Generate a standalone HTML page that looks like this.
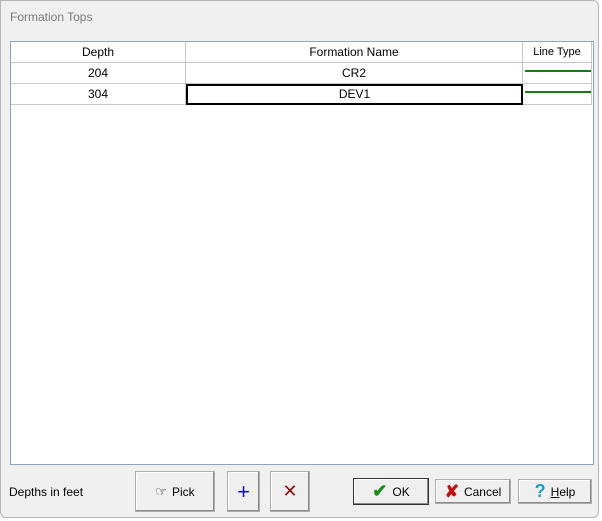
<!DOCTYPE html><html><head><style>
body{margin:0;width:602px;height:521px;background:#fff;position:relative;overflow:hidden;font-family:"Liberation Sans",sans-serif;font-size:12px;}
.win{position:absolute;left:0;top:0;width:599px;height:518px;background:#f0f0f0;border:1px solid #b5b5b5;border-radius:0 6px 6px 6px;box-sizing:border-box;}
.title{position:absolute;left:9px;top:9px;color:#7a7a7a;font-size:12px;}
.grid{position:absolute;left:9px;top:40px;width:584px;height:424px;background:#fff;border:1px solid #8aa5c0;box-sizing:border-box;}
.c{position:absolute;text-align:center;line-height:20px;color:#000;border-right:1px solid #c8c8c8;border-bottom:1px solid #c8c8c8;box-sizing:border-box;height:21px;}
.btn{position:absolute;background:#efefef;border:1px solid #adadad;box-shadow:inset -1px -1px 0 #8a8a8a, 1px 1px 0 #fff inset;box-sizing:border-box;display:flex;align-items:center;justify-content:center;gap:5px;}
.dk{border:1px solid #333;}
</style></head><body>
<div class="win">
<div class="title">Formation Tops</div>
<div class="grid">
<div class="c" style="left:0;top:0;width:175px;">Depth</div>
<div class="c" style="left:175px;top:0;width:337px;">Formation Name</div>
<div class="c" style="left:512px;top:0;width:69px;font-size:11px;">Line Type</div>
<div class="c" style="left:0;top:21px;width:175px;">204</div>
<div class="c" style="left:175px;top:21px;width:337px;">CR2</div>
<div class="c" style="left:512px;top:21px;width:69px;"><div style="position:absolute;left:2px;right:0;top:7px;height:2px;background:#1a7a1a"></div></div>
<div class="c" style="left:0;top:42px;width:175px;">304</div>
<div class="c" style="left:175px;top:42px;width:337px;border:2px solid #000;line-height:17px;">DEV1</div>
<div class="c" style="left:512px;top:42px;width:69px;"><div style="position:absolute;left:2px;right:0;top:7px;height:2px;background:#1a7a1a"></div></div>
</div>
<div style="position:absolute;left:8px;top:484px;">Depths in feet</div>
<div class="btn" style="left:134px;top:470px;width:80px;height:41px;"><span style="font-size:13px">☞</span>Pick</div>
<div class="btn" style="left:226px;top:470px;width:33px;height:41px;color:#1010d0;font-size:22px;">+</div>
<div class="btn" style="left:269px;top:470px;width:40px;height:41px;color:#8a1010;font-size:18px;">✕</div>
<div class="btn dk" style="left:352px;top:477px;width:76px;height:27px;"><span style="color:#1a8a1a;font-size:18px;font-weight:bold">✔</span>OK</div>
<div class="btn" style="left:434px;top:478px;width:76px;height:25px;"><span style="color:#c01010;font-size:17px;font-weight:bold">✘</span>Cancel</div>
<div class="btn" style="left:517px;top:478px;width:74px;height:25px;"><span style="color:#1aa0c0;font-size:18px;font-weight:bold">?</span><span><u>H</u>elp</span></div>
</div>
</body></html>
